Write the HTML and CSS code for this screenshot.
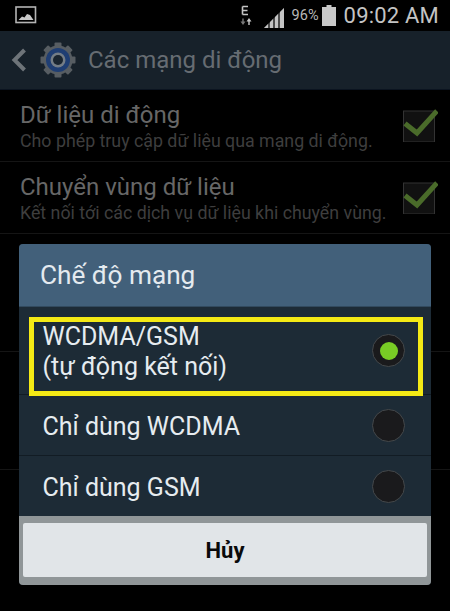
FILE: index.html
```html
<!DOCTYPE html>
<html lang="vi">
<head>
<meta charset="utf-8">
<title>Các mạng di động</title>
<link rel="stylesheet" href="styles.css">
</head>
<body>
<div class="screen">
  <div class="status">
    <svg class="pic" width="22" height="18" viewBox="0 0 22 18"><rect x="1" y="1" width="19.5" height="15.5" fill="none" stroke="#b4b4b4" stroke-width="1.6"/><path d="M3.5 14 L7 10.5 L9.5 11.5 L12 8 L15 9 L18.5 14 Z" fill="#c8c8c8"/></svg>
    <div class="status-right">
      <svg class="net" width="12" height="22" viewBox="0 0 12 22"><path d="M2.500 1.500h5.500M2.500 1.500v8M2.500 5.500h5M2.500 9.500h5.500" stroke="#c4c4c4" stroke-width="1.600" fill="none"/><path d="M3 20 L0.500 16.500H2.300V13.500H3.700V16.500H5.500Z" fill="#777"/><path d="M9 13 L11.500 16.500H9.700V20H8.300V16.500H6.500Z" fill="#c8c8c8"/></svg>
      <svg class="signal" width="21" height="20" viewBox="0 0 21 20"><path d="M0 20 L20 0 V20 Z" fill="#4c4c4c"/><path d="M0 20 L4 16 V20ZM6 20 V14 L9 11 V20ZM11 20 V9 L14 6 V20ZM16 20 V4 L20 0 V20Z" fill="#c4c4c4"/></svg>
      <span class="pct">96%</span>
      <svg class="batt" width="14" height="21" viewBox="0 0 14 21"><path d="M4.500 0h5v2h4.500v19H0V2h4.500z" fill="#c8c8c8"/></svg>
      <span class="clock">09:02 AM</span>
    </div>
  </div>
  <div class="actionbar">
    <svg class="back" width="15" height="24" viewBox="0 0 15 24"><path d="M13.500 2 L3.500 12 L13.500 22" fill="none" stroke="#6e7479" stroke-width="4"/></svg>
    <svg class="gear" width="36" height="36" viewBox="0 0 36 36">
      <g fill="#575d62"><circle cx="18" cy="18" r="14.500"/>
        <rect x="14.500" y="0.500" width="7" height="35" rx="1"/>
        <rect x="14.500" y="0.500" width="7" height="35" rx="1" transform="rotate(45 18 18)"/>
        <rect x="14.500" y="0.500" width="7" height="35" rx="1" transform="rotate(90 18 18)"/>
        <rect x="14.500" y="0.500" width="7" height="35" rx="1" transform="rotate(135 18 18)"/></g>
      <circle cx="18" cy="18" r="12" fill="#1f3e73"/>
      <circle cx="18" cy="18" r="7.500" fill="#747d86"/>
      <circle cx="18" cy="18" r="5" fill="#1a2530"/>
    </svg>
    <span class="screen-title">Các mạng di động</span>
  </div>
  <div class="list">
    <div class="pref">
      <div class="pref-text"><div class="pref-title">Dữ liệu di động</div><div class="pref-sub">Cho phép truy cập dữ liệu qua mạng di động.</div></div>
      <svg class="check" width="36" height="36" viewBox="0 0 36 36"><rect x="1.500" y="5" width="31" height="31" fill="#111" stroke="#333" stroke-width="1"/><path d="M3 17.500 L15 27 L35 5" fill="none" stroke="#4a6b2a" stroke-width="5"/></svg>
    </div>
    <div class="pref">
      <div class="pref-text"><div class="pref-title">Chuyển vùng dữ liệu</div><div class="pref-sub">Kết nối tới các dịch vụ dữ liệu khi chuyển vùng.</div></div>
      <svg class="check" width="36" height="36" viewBox="0 0 36 36"><rect x="1.500" y="5" width="31" height="31" fill="#111" stroke="#333" stroke-width="1"/><path d="M3 17.500 L15 27 L35 5" fill="none" stroke="#4a6b2a" stroke-width="5"/></svg>
    </div>
    <div class="pref pref-tall"></div>
    <div class="pref pref-tall"></div>
  </div>
  <div class="dialog">
    <div class="dialog-title">Chế độ mạng</div>
    <div class="option option-first">
      <span class="option-label">WCDMA/GSM<br>(tự động kết nối)</span>
      <span class="radio radio-on"></span>
    </div>
    <div class="option">
      <span class="option-label">Chỉ dùng WCDMA</span>
      <span class="radio"></span>
    </div>
    <div class="option option-last">
      <span class="option-label">Chỉ dùng GSM</span>
      <span class="radio"></span>
    </div>
    <div class="dialog-foot"><div class="cancel">Hủy</div></div>
    <div class="highlight"></div>
  </div>
</div>
</body>
</html>
```
FILE: styles.css
```css
* { box-sizing: border-box; }
html, body { margin: 0; padding: 0; background: #000; }
.screen {
  position: relative;
  width: 450px;
  height: 611px;
  overflow: hidden;
  font-family: Roboto, "Noto Sans", sans-serif;
  background: #000;
}
.status {
  height: 31px;
  background: #000;
  display: flex;
  align-items: center;
  justify-content: space-between;
  padding: 0 11px 0 15px;
}
.pic { display: block; margin-top: -1px; }
.status-right { display: flex; align-items: center; }
.net { display: block; margin-right: 12px; margin-top: 1px; }
.signal { display: block; margin-right: 7px; margin-top: 4px; }
.pct { font-size: 14.500px; color: #b8b8b8; width: 30px; }
.batt { display: block; margin-right: 8px; margin-top: -1px; }
.clock { font-size: 22px; color: #c4c4c4; letter-spacing: 0.200px; margin-top: -1px; }
.actionbar {
  height: 59px;
  background: #17212a;
  display: flex;
  align-items: center;
  padding: 0 0 0 11px;
  border-bottom: 1px solid #0b1420;
}
.back { display: block; margin-right: 14px; }
.gear { display: block; margin-right: 12px; margin-top: -1px; }
.screen-title { font-size: 24px; color: #666c72; }
.list { display: flex; flex-direction: column; }
.pref {
  height: 72px;
  display: flex;
  align-items: center;
  justify-content: space-between;
  padding: 0 12px 0 20px;
  border-bottom: 1px solid #151515;
}
.pref-tall { height: 118px; }
.pref-title { font-size: 24px; line-height: 28px; color: #676767; margin-top: 2px; }
.pref-sub { font-size: 17.800px; line-height: 22px; color: #3e3e3e; margin-top: 1px; }
.check { display: block; margin-top: -4px; }
.dialog {
  position: absolute;
  left: 19px;
  top: 244px;
  width: 412px;
  height: 341px;
  border-radius: 4px;
  overflow: hidden;
  background: #1d2b36;
  display: flex;
  flex-direction: column;
}
.dialog-title {
  height: 63px;
  background: #42607a;
  border-bottom: 1px solid #324a5e;
  color: #e4eaef;
  font-size: 26.200px;
  padding: 0 0 0 21px;
  display: flex;
  align-items: center;
}
.option {
  height: 61px;
  display: flex;
  align-items: center;
  justify-content: space-between;
  padding: 0 26px 0 23.500px;
  border-bottom: 1px solid #121c24;
  color: #e6ecf0;
  font-size: 25px;
}
.option-label { margin-top: 2px; }
.option-first { height: 88px; line-height: 30px; }
.option-last { height: 60px; border-bottom: 0; }
.radio {
  width: 33px;
  height: 33px;
  border-radius: 50%;
  background: #1a1a1c;
  border: 1px solid #44484b;
  display: flex;
  align-items: center;
  justify-content: center;
  flex: none;
}
.radio-on::after {
  content: "";
  width: 18px;
  height: 18px;
  border-radius: 50%;
  background: #79cc25;
}
.dialog-foot {
  flex: 1;
  background: #909698;
  padding: 7px 4px 8px;
}
.cancel {
  height: 54px;
  background: #e1e5e8;
  border-radius: 2px;
  color: #0a0a0a;
  font-size: 22px;
  font-weight: 700;
  display: flex;
  align-items: center;
  justify-content: center;
}
.highlight {
  position: absolute;
  left: 10px;
  top: 73px;
  width: 394px;
  height: 79px;
  border: 5px solid #f5ea15;
}
```
